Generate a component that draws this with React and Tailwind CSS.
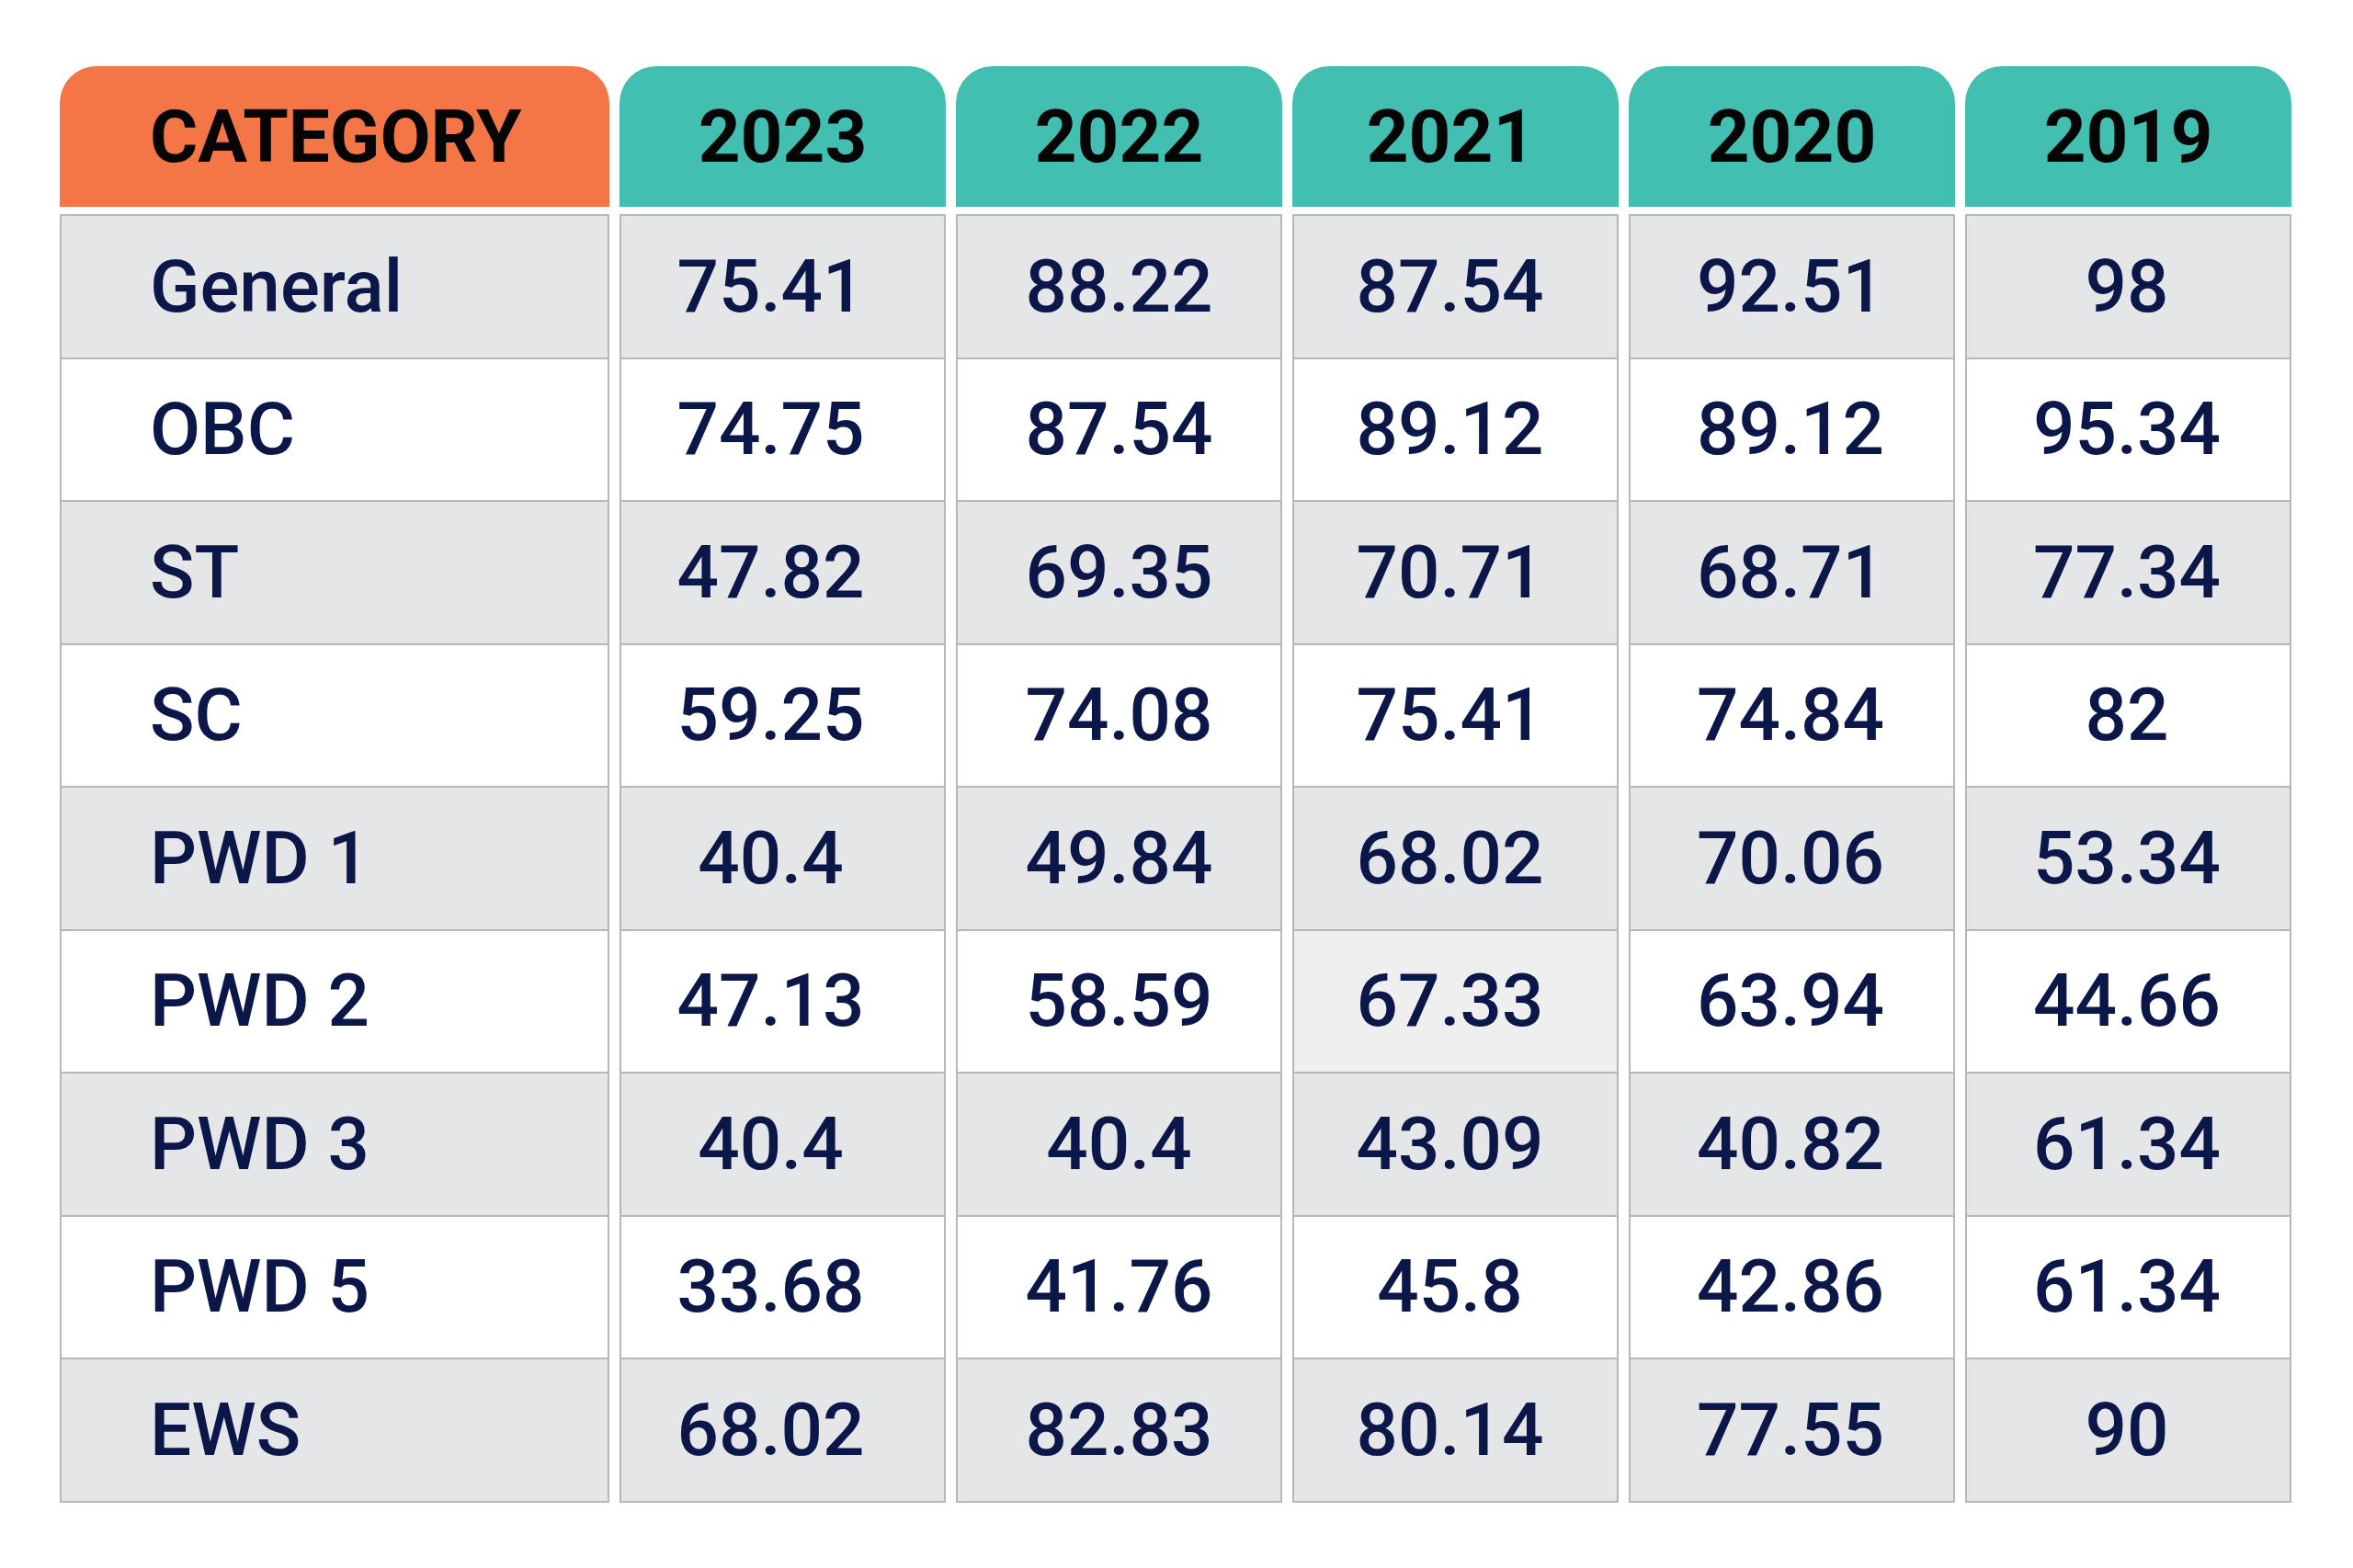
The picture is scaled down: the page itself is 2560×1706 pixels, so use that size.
const years = ["2023", "2022", "2021", "2020", "2019"];

// small per-column nudges so the figures sit where the source has them
const bodyPad = ["pr-[26px]", "", "pr-[12px]", "pr-[3px]", "pr-[3px]"];
const headPad = ["", "", "pr-[10px]", "", ""];

const rows = [
  { cat: "General", vals: ["75.41", "88.22", "87.54", "92.51", "98"] },
  { cat: "OBC", vals: ["74.75", "87.54", "89.12", "89.12", "95.34"] },
  { cat: "ST", vals: ["47.82", "69.35", "70.71", "68.71", "77.34"] },
  { cat: "SC", vals: ["59.25", "74.08", "75.41", "74.84", "82"] },
  { cat: "PWD 1", vals: ["40.4", "49.84", "68.02", "70.06", "53.34"] },
  { cat: "PWD 2", vals: ["47.13", "58.59", "67.33", "63.94", "44.66"] },
  { cat: "PWD 3", vals: ["40.4", "40.4", "43.09", "40.82", "61.34"] },
  { cat: "PWD 5", vals: ["33.68", "41.76", "45.8", "42.86", "61.34"] },
  { cat: "EWS", vals: ["68.02", "82.83", "80.14", "77.55", "90"] },
];

const font = { fontFamily: "Roboto, 'Liberation Sans', sans-serif" };

function cellBg(rowIdx, colIdx) {
  // the 2021 cell of PWD 2 is a slightly lighter grey in the source
  if (rowIdx === 5 && colIdx === 2) return "bg-[#efeff0]";
  return rowIdx % 2 === 0 ? "bg-[#e5e6e8]" : "bg-white";
}

function Column({ title, header, cells, first, hPad = "", bPad = "" }) {
  return (
    <div className={first ? "flex flex-col w-[598px]" : "flex flex-col w-[355px]"}>
      <div
        className={
          "h-[153px] rounded-t-[40px] flex items-center text-[80px] font-bold text-[#050505] " +
          header +
          (first ? " pl-[98px]" : " justify-center ") +
          hPad
        }
      >
        {title}
      </div>
      <div className="mt-[8px] border-2 border-[#b7b7b7] flex flex-col">
        {cells.map((c, i) => (
          <div
            key={i}
            className={
              "flex items-center text-[80px] font-medium text-[#0b1748] " +
              c.bg +
              (i > 0 ? " h-[155.5px] border-t-2 border-[#b7b7b7]" : " h-[153.5px]") +
              (first ? " pl-[96px]" : " justify-center ") +
              bPad
            }
          >
            {c.text}
          </div>
        ))}
      </div>
    </div>
  );
}

export default function App() {
  return (
    <div className="min-h-screen bg-white pt-[72px] pl-[65px]" style={font}>
      <div className="flex gap-[11px]">
        <Column
          first
          title="CATEGORY"
          header="bg-[#f47646]"
          cells={rows.map((r, i) => ({ text: r.cat, bg: cellBg(i, -1) }))}
        />
        {years.map((y, ci) => (
          <Column
            key={y}
            title={y}
            header="bg-[#43bfb2]"
            hPad={headPad[ci]}
            bPad={bodyPad[ci]}
            cells={rows.map((r, i) => ({ text: r.vals[ci], bg: cellBg(i, ci) }))}
          />
        ))}
      </div>
    </div>
  );
}
